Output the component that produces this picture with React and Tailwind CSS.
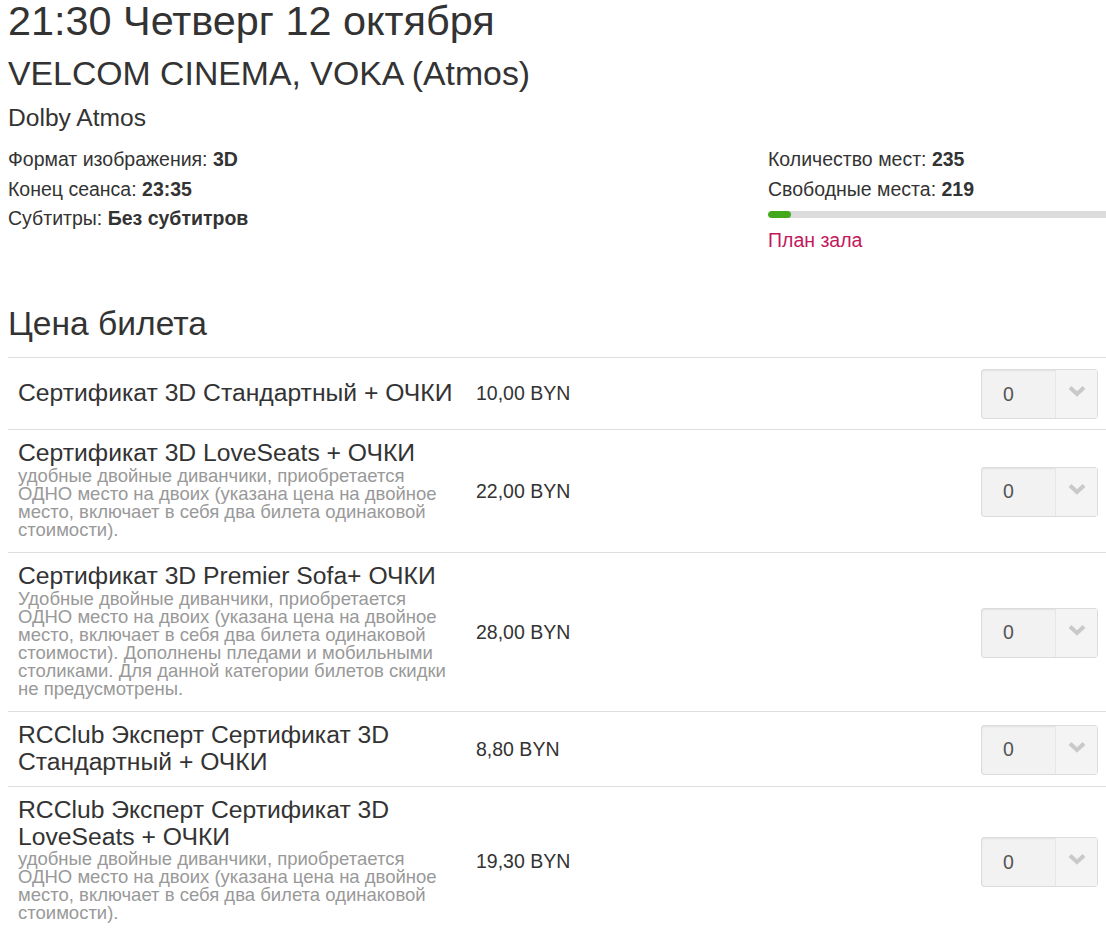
import React from "react";

const tickets = [
  {
    name: "Сертификат 3D Стандартный + ОЧКИ",
    price: "10,00 BYN",
  },
  {
    name: "Сертификат 3D LoveSeats + ОЧКИ",
    desc: "удобные двойные диванчики, приобретается ОДНО место на двоих (указана цена на двойное место, включает в себя два билета одинаковой стоимости).",
    price: "22,00 BYN",
  },
  {
    name: "Сертификат 3D Premier Sofa+ ОЧКИ",
    desc: "Удобные двойные диванчики, приобретается ОДНО место на двоих (указана цена на двойное место, включает в себя два билета одинаковой стоимости). Дополнены пледами и мобильными столиками. Для данной категории билетов скидки не предусмотрены.",
    price: "28,00 BYN",
  },
  {
    name: "RCClub Эксперт Сертификат 3D Стандартный + ОЧКИ",
    price: "8,80 BYN",
  },
  {
    name: "RCClub Эксперт Сертификат 3D LoveSeats + ОЧКИ",
    desc: "удобные двойные диванчики, приобретается ОДНО место на двоих (указана цена на двойное место, включает в себя два билета одинаковой стоимости).",
    price: "19,30 BYN",
  },
];

function Select() {
  return (
    <div className="flex h-[50px] w-[117px] rounded-[3px] border border-[#dcdcdc] bg-[#f2f2f2] shadow-[inset_0_1px_2px_rgba(0,0,0,0.07)]">
      <div className="flex w-[73px] items-center pl-[21px] text-[19.5px] text-[#555]">0</div>
      <div className="flex flex-1 justify-center border-l border-[#e6e6e6] bg-[#f4f4f4] pt-[15px]">
        <svg width="18" height="12" viewBox="0 0 18 12">
          <path d="M2 2.5 L9 9 L16 2.5" fill="none" stroke="#c9c9c9" strokeWidth="4" strokeLinecap="butt" strokeLinejoin="miter" />
        </svg>
      </div>
    </div>
  );
}

export default function App() {
  return (
    <div
      className="min-h-[934px] bg-white pl-[8px] text-[#333]"
      style={{ fontFamily: '"Liberation Sans", Arial, sans-serif' }}
    >
      <h1 className="text-[41.4px] leading-[42px] font-normal">21:30 Четверг 12 октября</h1>
      <h2 className="mt-[11px] text-[33.8px] leading-[40px] font-normal">VELCOM CINEMA, VOKA (Atmos)</h2>
      <h3 className="mt-[10px] text-[24.6px] leading-[30px] font-normal">Dolby Atmos</h3>

      <div className="mt-[12px] flex text-[19.5px] leading-[29.7px]">
        <div className="flex-1">
          <div>
            Формат изображения: <b>3D</b>
          </div>
          <div>
            Конец сеанса: <b>23:35</b>
          </div>
          <div>
            Субтитры: <b>Без субтитров</b>
          </div>
        </div>
        <div className="w-[338px]">
          <div>
            Количество мест: <b>235</b>
          </div>
          <div>
            Свободные места: <b>219</b>
          </div>
          <div className="mt-[7px] h-[7px] w-full overflow-hidden rounded-l-[4px] bg-[#dcdcdc]">
            <div className="h-full w-[23px] rounded-[4px] bg-[#43a81c]" />
          </div>
          <div className="mt-[7px] leading-[30px] text-[#c2185b]">План зала</div>
        </div>
      </div>

      <h2 className="mt-[49px] text-[33.6px] leading-[40px] font-normal">Цена билета</h2>

      <div className="mt-[13px]">
        {tickets.map((t, i) => (
          <div key={i} className="flex items-center border-t border-[#dddddd]">
            <div className={t.desc ? "w-[462px] px-[10px] pt-[10px] pb-[13.5px]" : "w-[462px] px-[10px] pt-[10px] pb-[11px]"}>
              <div className="text-[24.7px] leading-[26.5px] text-[#333]">{t.name}</div>
              {t.desc && (
                <div className="text-[18.5px] leading-[18px] text-[#999]">{t.desc}</div>
              )}
            </div>
            <div className="flex-1 pl-[6px] text-[19.5px]">{t.price}</div>
            <div className="pt-[11px] pb-[10px] pr-[8px]">
              <Select />
            </div>
          </div>
        ))}
      </div>
    </div>
  );
}
